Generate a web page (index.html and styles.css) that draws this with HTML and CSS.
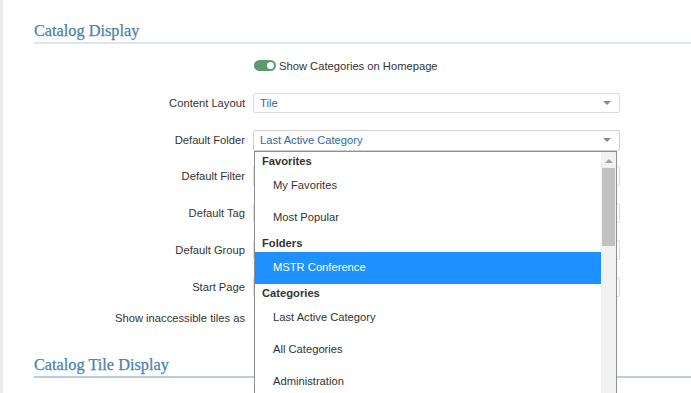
FILE: index.html
```html
<!DOCTYPE html>
<html>
<head>
<meta charset="utf-8">
<link rel="stylesheet" href="styles.css">
</head>
<body>
<div class="page">
  <section class="section">
    <h2 class="section-title">Catalog Display</h2>
    <div class="form">
      <div class="row row-toggle">
        <span class="label"></span>
        <div class="toggle-line">
          <span class="toggle"><span class="knob"></span></span>
          <span class="toggle-text">Show Categories on Homepage</span>
        </div>
      </div>
      <div class="row">
        <span class="label">Content Layout</span>
        <div class="select"><span class="value">Tile</span><span class="caret"></span></div>
      </div>
      <div class="row">
        <span class="label">Default Folder</span>
        <div class="select-wrap">
          <div class="select"><span class="value">Last Active Category</span><span class="caret"></span></div>
          <div class="dropdown">
            <div class="list">
              <div class="group">Favorites</div>
              <div class="item">My Favorites</div>
              <div class="item">Most Popular</div>
              <div class="group">Folders</div>
              <div class="item selected">MSTR Conference</div>
              <div class="group">Categories</div>
              <div class="item">Last Active Category</div>
              <div class="item">All Categories</div>
              <div class="item">Administration</div>
            </div>
            <div class="scrollbar">
              <span class="arrow-up"></span>
              <span class="thumb"></span>
            </div>
          </div>
        </div>
      </div>
      <div class="row">
        <span class="label">Default Filter</span>
        <div class="select"><span class="value"></span><span class="caret"></span></div>
      </div>
      <div class="row">
        <span class="label">Default Tag</span>
        <div class="select"><span class="value"></span><span class="caret"></span></div>
      </div>
      <div class="row">
        <span class="label">Default Group</span>
        <div class="select"><span class="value"></span><span class="caret"></span></div>
      </div>
      <div class="row">
        <span class="label">Start Page</span>
        <div class="select"><span class="value"></span><span class="caret"></span></div>
      </div>
      <div class="row row-short">
        <span class="label">Show inaccessible tiles as</span>
        <div></div>
      </div>
    </div>
  </section>
  <section class="section section-second">
    <h2 class="section-title title-second">Catalog Tile Display</h2>
  </section>
</div>
</body>
</html>
```
FILE: styles.css
```css
html, body {
  margin: 0;
  padding: 0;
  background: #ffffff;
}
body {
  font-family: "Liberation Sans", Arial, sans-serif;
  font-size: 11.2px;
  color: #333333;
  overflow: hidden;
}
.page {
  height: 393px;
  border-left: 3px solid #ececec;
  padding-left: 31px;
  overflow: hidden;
}
.section-title {
  margin: 0;
  padding-top: 21px;
  padding-bottom: 1px;
  font-family: "Liberation Serif", "DejaVu Serif", serif;
  font-weight: normal;
  font-size: 16.3px;
  line-height: 20px;
  color: #4a82ad;
  border-bottom: 2px solid #dbe6ee;
  -webkit-text-stroke: 0.25px #4a82ad;
}
.title-second {
  padding-top: 0;
  border-bottom-color: #b9cfe0;
}
.section-second {
  margin-top: 30px;
}
.form {
  padding-top: 11px;
  display: flex;
  flex-direction: column;
  gap: 16.8px;
}
.row {
  display: grid;
  grid-template-columns: 211px 367px;
  column-gap: 8px;
  align-items: center;
  height: 20px;
}
.row-toggle {
  height: 21px;
}
.row-short {
  height: 14px;
  margin-top: -3px;
}
.label {
  text-align: right;
  line-height: 14px;
  color: #333333;
  white-space: nowrap;
}
.toggle-line {
  display: flex;
  align-items: center;
  gap: 3px;
  padding-left: 1px;
}
.toggle {
  width: 22px;
  height: 11px;
  border-radius: 6px;
  background: #5c9a6e;
  display: flex;
  align-items: center;
  justify-content: flex-end;
  padding-right: 2px;
  box-sizing: border-box;
}
.knob {
  width: 7px;
  height: 7px;
  border-radius: 50%;
  background: #ffffff;
}
.toggle-text {
  color: #333333;
}
.select-wrap {
  position: relative;
  height: 20px;
}
.select {
  height: 20px;
  box-sizing: border-box;
  border: 1px solid #dcdcdc;
  border-radius: 2px;
  background: #ffffff;
  display: flex;
  align-items: center;
  justify-content: space-between;
  padding: 0 8px 0 6px;
}
.select-wrap .select {
  height: 21px;
  border-color: #d0d0d0;
}
.value {
  color: #33689c;
  line-height: 14px;
}
.caret {
  width: 0;
  height: 0;
  border-left: 4px solid transparent;
  border-right: 4px solid transparent;
  border-top: 4px solid #8a8a8a;
}
.dropdown {
  position: absolute;
  top: 21px;
  left: 1px;
  width: 363px;
  height: 260px;
  box-sizing: border-box;
  border: 1px solid #8f8f8f;
  background: #ffffff;
  display: flex;
  z-index: 5;
}
.list {
  flex: 1;
  display: flex;
  flex-direction: column;
}
.group {
  height: 18px;
  line-height: 18px;
  padding-left: 7px;
  font-weight: bold;
  color: #333333;
}
.item {
  height: 32px;
  line-height: 31px;
  padding-left: 18px;
  color: #333333;
}
.item.selected {
  background: #1e90ff;
  color: #ffffff;
}
.scrollbar {
  width: 15px;
  background: #f1f1f1;
  display: flex;
  flex-direction: column;
  align-items: center;
}
.arrow-up {
  margin-top: 7px;
  width: 0;
  height: 0;
  border-left: 4px solid transparent;
  border-right: 4px solid transparent;
  border-bottom: 4px solid #a3a3a3;
}
.thumb {
  margin-top: 5px;
  width: 13px;
  height: 78px;
  background: #c1c1c1;
}
```
